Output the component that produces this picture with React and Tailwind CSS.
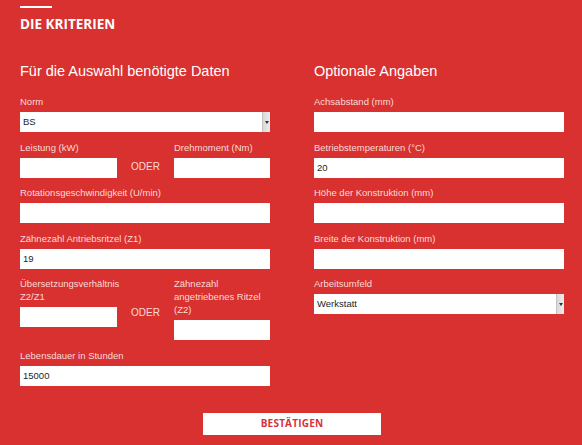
import React from "react";

const labelCls =
  "block text-[9.5px] leading-[13px] text-[#fbdad8] mb-[4px] font-['Liberation_Sans',Arial,sans-serif]";
const inputCls =
  "block w-full h-[20px] bg-white border-0 outline-none px-[3px] text-[9.5px] text-[#1e1e1e] font-['Liberation_Sans',Arial,sans-serif]";

function TextField({ label, value = "", className = "" }) {
  return (
    <div className={className}>
      <label className={labelCls}>{label}</label>
      <input className={inputCls} defaultValue={value} />
    </div>
  );
}

function SelectField({ label, value, className = "" }) {
  return (
    <div className={className}>
      <label className={labelCls}>{label}</label>
      <div className="flex h-[20px] bg-white">
        <div className="flex-1 flex items-center px-[3px] text-[9.5px] text-[#1e1e1e] font-['Liberation_Sans',Arial,sans-serif]">
          {value}
        </div>
        <div className="w-[8px] h-full bg-gradient-to-r from-[#d9d9d9] to-[#ececec] border-l border-[#c4c4c4] flex items-center justify-center">
          <div className="w-0 h-0 border-l-[2px] border-r-[2px] border-t-[3px] border-l-transparent border-r-transparent border-t-[#333]" />
        </div>
      </div>
    </div>
  );
}

function Oder({ top }) {
  return (
    <div
      className={`text-center text-[10px] leading-[13px] text-[#fbdad8] font-['Liberation_Sans',Arial,sans-serif] ${top}`}
    >
      ODER
    </div>
  );
}

export default function App() {
  return (
    <div className="w-[582px] h-[445px] bg-[#d8312f] overflow-hidden pl-[20px] pr-[18px] pt-[6px]">
      <div className="w-[32px] h-[2px] bg-white" />
      <h2 className="mt-[7px] text-[13.5px] leading-[18px] font-bold text-white font-['Open_Sans',sans-serif]">
        DIE KRITERIEN
      </h2>

      <div className="mt-[30px] grid grid-cols-[250px_250px] gap-x-[44px]">
        {/* Pflichtangaben */}
        <div>
          <h3 className="text-[14.5px] leading-[17px] text-white font-['Liberation_Sans',Arial,sans-serif] mb-[15px]">
            Für die Auswahl benötigte Daten
          </h3>
          <SelectField label="Norm" value="BS" />

          <div className="mt-[8.5px] grid grid-cols-[97px_1fr_96px]">
            <TextField label="Leistung (kW)" />
            <Oder top="pt-[19px]" />
            <TextField label="Drehmoment (Nm)" />
          </div>

          <TextField className="mt-[8.5px]" label="Rotationsgeschwindigkeit (U/min)" />
          <TextField className="mt-[8.5px]" label="Zähnezahl Antriebsritzel (Z1)" value="19" />

          <div className="mt-[8.5px] grid grid-cols-[97px_1fr_96px]">
            <TextField
              label={
                <>
                  Übersetzungsverhältnis
                  <br />
                  Z2/Z1
                </>
              }
            />
            <Oder top="pt-[28.5px]" />
            <TextField
              label={
                <>
                  Zähnezahl
                  <br />
                  angetriebenes Ritzel
                  <br />
                  (Z2)
                </>
              }
            />
          </div>

          <TextField className="mt-[8.5px]" label="Lebensdauer in Stunden" value="15000" />
        </div>

        {/* Optionale Angaben */}
        <div>
          <h3 className="text-[14.5px] leading-[17px] text-white font-['Liberation_Sans',Arial,sans-serif] mb-[15px]">
            Optionale Angaben
          </h3>
          <TextField label="Achsabstand (mm)" />
          <TextField className="mt-[8.5px]" label="Betriebstemperaturen (°C)" value="20" />
          <TextField className="mt-[8.5px]" label="Höhe der Konstruktion (mm)" />
          <TextField className="mt-[8.5px]" label="Breite der Konstruktion (mm)" />
          <SelectField className="mt-[8.5px]" label="Arbeitsumfeld" value="Werkstatt" />
        </div>
      </div>

      <div className="mt-[27px] w-[544px] flex justify-center">
        <button className="w-[178px] h-[22px] bg-white text-[#d5333a] text-[10px] font-bold font-['Open_Sans',sans-serif] tracking-[0.2px]">
          BESTÄTIGEN
        </button>
      </div>
    </div>
  );
}
